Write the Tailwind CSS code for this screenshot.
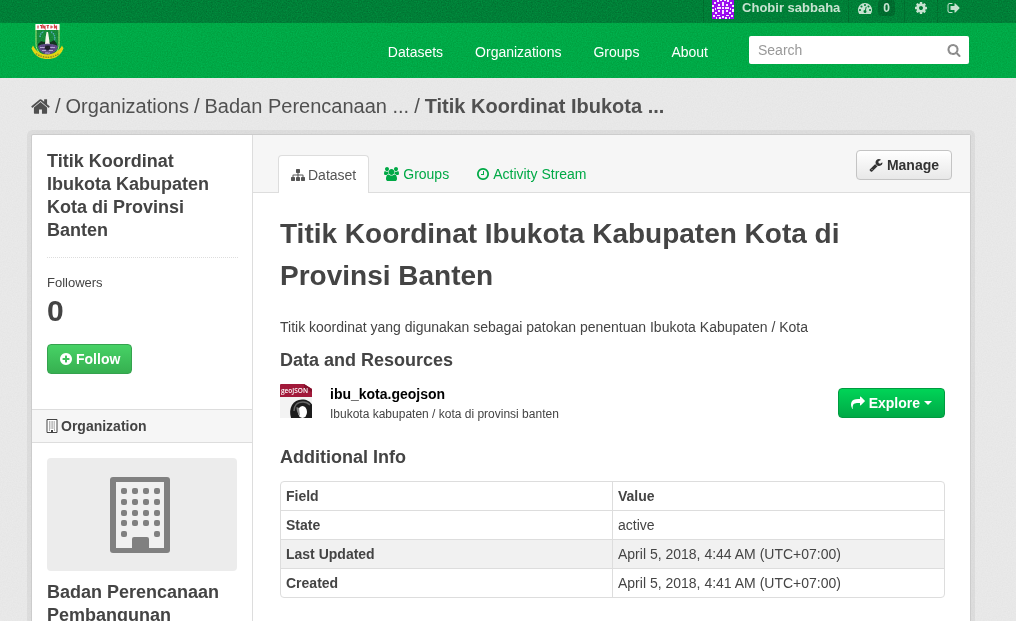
<!DOCTYPE html>
<html lang="en">
<head>
<meta charset="utf-8">
<meta name="viewport" content="width=device-width, initial-scale=1">
<title>Titik Koordinat Ibukota Kabupaten Kota di Provinsi Banten</title>
<script src="https://cdn.jsdelivr.net/npm/@tailwindcss/browser@4"></script>
</head>
<body class="relative flex h-screen flex-col overflow-hidden bg-[#e8e8e8] font-['Liberation_Sans',Arial,sans-serif] text-sm leading-5 text-[#444]">

<!-- Paper grain over the bars and the page background -->
<svg class="pointer-events-none absolute inset-0 z-10 size-full opacity-20 mix-blend-overlay" aria-hidden="true">
  <filter id="grain" x="0" y="0" width="100%" height="100%" color-interpolation-filters="sRGB"><feTurbulence type="fractalNoise" baseFrequency="0.8" numOctaves="2"/><feColorMatrix values="1 0 0 0 0  1 0 0 0 0  1 0 0 0 0  0 0 0 0 1"/></filter>
  <rect width="100%" height="100%" filter="url(#grain)"/>
</svg>

<!-- Account bar -->
<div class="flex h-[23px] shrink-0 items-end justify-end overflow-hidden bg-[#007f37] pr-[46px] text-[13px] font-bold text-[#c6e3d0]">
  <nav class="flex h-[31px] items-center" aria-label="Account">
    <a href="#" class="flex h-full items-center gap-2 border-l border-[#00702f] px-2">
      <svg class="size-[22px]" viewBox="0 0 22 22" shape-rendering="crispEdges" aria-hidden="true">
        <path fill="#9a0cf0" d="M0 0h22v22H0z"/>
        <path fill="#f6e8ff" d="M10 5h2v4h-2zM10 13h2v4h-2zM5 10h4v2H5zM13 10h4v2h-4zM10 10h2v2h-2zM2 5h2v2H2zM18 5h2v2h-2zM5 3h2v2H5zM15 3h2v2h-2zM6 7h2v2H6zM14 7h2v2h-2zM6 13h2v2H6zM14 13h2v2h-2zM0 8h2v2H0zM20 8h2v2h-2zM0 12h2v3H0zM20 12h2v3h-2zM3 15h2v2H3zM17 15h2v2h-2zM1 18h2v2H1zM19 18h2v2h-2zM5 18h3v1H5zM14 18h3v1h-3zM7 20h2v2H7zM13 20h2v2h-2zM10 19h2v2h-2zM8 2h2v2H8zM12 2h2v2h-2zM3 11h1v2H3zM18 11h1v2h-1zM4 20h1v2H4zM17 20h1v2h-1z"/>
      </svg>
      <span>Chobir sabbaha</span>
    </a>
    <a href="#" aria-label="Dashboard, 0 new" class="flex h-full items-center gap-[6px] border-l border-[#00702f] px-[9px]">
      <svg class="size-[14px]" viewBox="0 0 1792 1792" fill="currentColor" aria-hidden="true"><path d="M384 1152q0-53-37.5-90.5t-90.5-37.5-90.5 37.5-37.5 90.5 37.5 90.5 90.5 37.5 90.5-37.5 37.5-90.5zm192-448q0-53-37.5-90.5t-90.5-37.5-90.5 37.5-37.5 90.5 37.5 90.5 90.5 37.5 90.5-37.5 37.5-90.5zm428 481l101-382q6-26-7.5-48.5t-38.5-29.5-48 6.5-30 39.5l-101 382q-60 5-107 43.5t-63 98.5q-20 77 20 146t117 89 146-20 89-117q16-60-6-117t-72-91zm660-33q0-53-37.5-90.5t-90.5-37.5-90.5 37.5-37.5 90.5 37.5 90.5 90.5 37.5 90.5-37.5 37.5-90.5zm-640-640q0-53-37.5-90.5t-90.5-37.5-90.5 37.5-37.5 90.5 37.5 90.5 90.5 37.5 90.5-37.5 37.5-90.5zm448 192q0-53-37.5-90.5t-90.5-37.5-90.5 37.5-37.5 90.5 37.5 90.5 90.5 37.5 90.5-37.5 37.5-90.5zm320 448q0 261-141 483-19 29-54 29h-1402q-35 0-54-29-141-221-141-483 0-182 71-348t191-286 286-191 348-71 348 71 286 191 191 286 71 348z"/></svg>
      <span class="rounded bg-[#006b2e] px-[5px] text-xs leading-4">0</span>
    </a>
    <a href="#" aria-label="Settings" class="flex h-full items-center border-l border-[#00702f] px-[9px]">
      <svg class="size-[14px]" viewBox="0 0 1792 1792" fill="currentColor" aria-hidden="true"><path d="M1152 896q0-106-75-181t-181-75-181 75-75 181 75 181 181 75 181-75 75-181zm512-109v222q0 12-8 23t-20 13l-185 28q-19 54-39 91 35 50 107 138 10 12 10 25t-9 23q-27 37-99 108t-94 71q-12 0-26-9l-138-108q-44 23-91 38-16 136-29 186-7 28-36 28h-222q-14 0-24.5-8.5t-11.5-21.5l-28-184q-49-16-90-37l-141 107q-10 9-25 9-14 0-25-11-126-114-165-168-7-10-7-23 0-12 8-23 15-21 51-66.5t54-70.5q-27-50-41-99l-183-27q-13-2-21-12.5t-8-23.5v-222q0-12 8-23t19-13l186-28q14-46 39-92-40-57-107-138-10-12-10-24 0-10 9-23 26-36 98.5-107.5t94.5-71.5q13 0 26 10l138 107q44-23 91-38 16-136 29-186 7-28 36-28h222q14 0 24.5 8.5t11.5 21.5l28 184q49 16 90 37l142-107q9-9 24-9 13 0 25 10 129 119 165 170 7 8 7 22 0 12-8 23-15 21-51 66.5t-54 70.5q26 50 41 98l183 28q13 2 21 12.5t8 23.5z"/></svg>
    </a>
    <a href="#" aria-label="Log out" class="flex h-full items-center border-l border-[#00702f] px-[9px]">
      <svg class="size-[14px]" viewBox="0 0 1792 1792" fill="currentColor" aria-hidden="true"><path d="M704 1440q0 4 1 20t.5 26.5-3 23.5-10 19.5-20.5 6.5h-320q-119 0-203.5-84.5t-84.5-203.5v-704q0-119 84.5-203.5t203.5-84.5h320q13 0 22.5 9.5t9.5 22.5q0 4 1 20t.5 26.5-3 23.5-10 19.5-20.5 6.5h-320q-66 0-113 47t-47 113v704q0 66 47 113t113 47h312l11.5 1 11.5 3 8 5.5 7 9 2 13.5zm928-544q0 26-19 45l-544 544q-19 19-45 19t-45-19-19-45v-288h-448q-26 0-45-19t-19-45v-384q0-26 19-45t45-19h448v-288q0-26 19-45t45-19 45 19l544 544q19 19 19 45z"/></svg>
    </a>
  </nav>
</div>

<!-- Site header -->
<header class="flex h-[55px] shrink-0 items-start justify-between bg-[#00a946] pr-[47px] pl-[31px] text-white">
  <a href="#" aria-label="Banten open data">
    <svg class="h-[37px] w-[33px]" viewBox="0 0 33 37" aria-hidden="true">
      <path d="M5 1.500h23v20c0 7-5 11-11.500 13.500C10 32 5 28 5 21z" fill="#158a3b" stroke="#a8df71"/>
      <path d="M4.500 1h24v6h-24z" fill="#fff"/>
      <path d="M7 2.500v3M9 2.500h1.500v3M12 5.500v-3l2 3v-3M15.500 2.500h2.500M16.800 2.500v3M20 2.500v3M20 4h2M23.500 5.500v-3l2 3v-3" fill="none" stroke="#d23d42" stroke-width="1.200"/>
      <path d="M9 14c0-3 2-5 4-5M20 9c3 1 5 5 3 10" fill="none" stroke="#54a8ba" stroke-width="1.400" stroke-dasharray="1.500 .7"/>
      <path d="M7 21l3-3 3 1 3-1 4 1 3-2 3 4v3H7z" fill="#12331f"/>
      <path d="M14 21l.7-7 .8-5h1.500l.8 5 1 7z" fill="#f4f4ea"/>
      <path d="M7 23c5-3 14-3 20 0-1 5-5 8-10 9-5-1-9-4-10-9z" fill="#5f4b86"/>
      <path d="M9 24.500h5m5 0h5m-13 3h4m3 0h4m-8 2.500h5" stroke="#b5a5d2"/>
      <path d="M14.500 22.500h4l1 3-3 2-3-2z" fill="#20202b"/>
      <path d="M.5 25.500l1.500-3c3 6 8 9 14.500 9S28 28 31 22.500l1.500 3-1.500 3c-3 5-8 7.500-14.500 7.500S5 33.500 2 28.500z" fill="#e3d514"/>
      <path d="M5 30.500c7 5 16 5 23 0" fill="none" stroke="#8c862a" stroke-width="1.400" stroke-dasharray="1.500 1"/>
    </svg>
  </a>
  <div class="flex items-center gap-[41px] pt-[13px]">
    <nav class="flex gap-8 pt-1" aria-label="Main">
      <a href="#">Datasets</a>
      <a href="#">Organizations</a>
      <a href="#">Groups</a>
      <a href="#">About</a>
    </nav>
    <form class="flex h-7 w-[220px] items-center rounded-xs bg-white pr-2 pl-[9px]" role="search">
      <input type="search" aria-label="Search" placeholder="Search" class="min-w-0 flex-1 bg-transparent text-[#555] outline-none placeholder:text-[#999]">
      <button type="submit" aria-label="Submit search" class="text-[#8c8c8c]">
        <svg class="size-[14px]" viewBox="0 0 1792 1792" fill="currentColor" aria-hidden="true"><path d="M1216 832q0-185-131.500-316.500t-316.500-131.500-316.500 131.500-131.500 316.500 131.500 316.500 316.500 131.500 316.500-131.500 131.500-316.500zm512 832q0 52-38 90t-90 38q-54 0-90-38l-343-342q-179 124-399 124-143 0-273.500-55.500t-225-150-150-225-55.500-273.500 55.500-273.500 150-225 225-150 273.500-55.500 273.500 55.500 225 150 150 225 55.500 273.500q0 220-124 399l343 343q37 37 37 90z"/></svg>
      </button>
    </form>
  </div>
</header>

<div class="relative z-20 flex flex-1 flex-col pr-[45px] pl-[31px]">
  <nav aria-label="Breadcrumb" class="flex h-14 shrink-0 items-center gap-[5px] text-xl text-[#505050]">
    <a href="#" aria-label="Home">
      <svg class="size-[19px]" viewBox="64 64 1664 1664" fill="currentColor" aria-hidden="true"><path d="M1472 992v480q0 26-19 45t-45 19h-384v-384h-256v384h-384q-26 0-45-19t-19-45v-480q0-1 .5-3t.5-3l575-474 575 474q1 2 1 6zm223-69l-62 74q-8 9-21 11h-3q-13 0-21-7l-692-577-692 577q-12 8-24 7-13-2-21-11l-62-74q-8-10-7-23.500t11-21.500l719-599q32-26 76-26t76 26l244 204v-195q0-14 9-23t23-9h192q14 0 23 9t9 23v408l219 182q10 8 11 21.500t-7 23.500z"/></svg>
    </a>
    <span>/</span><a href="#">Organizations</a>
    <span>/</span><a href="#">Badan Perencanaan ...</a>
    <span>/</span><a href="#" class="font-bold">Titik Koordinat Ibukota ...</a>
  </nav>

  <div class="flex flex-1 rounded-t-xs border border-[#ccc] bg-white ring-4 ring-black/5">
    <aside class="w-[221px] shrink-0 border-r border-[#ddd]">
      <section class="px-[15px] pt-[15px] pb-[35px]">
        <h1 class="-mr-px border-b border-dotted border-[#ddd] pb-[15px] text-lg leading-[23px] font-bold">Titik Koordinat Ibukota Kabupaten Kota di Provinsi Banten</h1>
        <dl class="pt-[15px]">
          <dt class="text-[13px]">Followers</dt>
          <dd class="text-[30px] leading-9 font-bold">0</dd>
        </dl>
        <button type="button" class="mt-[15px] flex h-[30px] items-center gap-[3px] rounded-sm border border-[#35a24e] bg-linear-to-b from-[#47d266] to-[#36b050] px-[11px] font-bold text-white">
          <svg class="size-[14px]" viewBox="0 0 1792 1792" fill="currentColor" aria-hidden="true"><path d="M1344 960v-128q0-26-19-45t-45-19h-256v-256q0-26-19-45t-45-19h-128q-26 0-45 19t-19 45v256h-256q-26 0-45 19t-19 45v128q0 26 19 45t45 19h256v256q0 26 19 45t45 19h128q26 0 45-19t19-45v-256h256q26 0 45-19t19-45zm320-64q0 209-103 385.500t-279.500 279.500-385.500 103-385.500-103-279.500-279.500-103-385.500 103-385.500 279.500-279.500 385.500-103 385.500 103 279.500 279.500 103 385.500z"/></svg>
          Follow
        </button>
      </section>
      <section>
        <h2 class="flex h-[34px] items-center gap-[3px] border-y border-[#ddd] bg-[#f6f6f6] px-[14px] font-bold">
          <svg class="h-[14px] w-[12px]" viewBox="0 0 12 14" aria-hidden="true">
            <path d="M1 .5h10v13H1z" fill="#fff" stroke="#444"/>
            <path d="M3 3h6M3 5h6M3 7h6M3 9h6M3 11h1M8 11h1" stroke="#666" stroke-dasharray="1 .6"/>
            <path d="M5 11h2v3H5z" fill="#444"/>
          </svg>
          Organization
        </h2>
        <div class="px-[15px] pt-[15px]">
          <div class="flex h-[113px] items-center justify-center rounded-sm bg-[#ececec] pr-1">
            <svg class="h-[76px] w-[60px]" viewBox="0 0 60 76" fill="#808080" aria-label="Organization" role="img">
              <rect width="60" height="76" rx="3"/>
              <path d="M6 5h48v66H39V62q0-2-2-2H24q-2 0-2 2v9H6z" fill="#f0f0f0"/>
              <g id="row"><rect x="11" y="11" width="6" height="6" rx="2"/><rect x="22" y="11" width="6" height="6" rx="2"/><rect x="33" y="11" width="6" height="6" rx="2"/><rect x="44" y="11" width="6" height="6" rx="2"/></g>
              <use href="#row" y="11"/><use href="#row" y="22"/><use href="#row" y="32"/>
              <rect x="11" y="54" width="6" height="6" rx="2"/><rect x="44" y="54" width="6" height="6" rx="2"/>
            </svg>
          </div>
          <h2 class="pt-[10px] text-lg leading-[23px] font-bold">Badan Perencanaan Pembangunan</h2>
        </div>
      </section>
    </aside>

    <main class="min-w-0 flex-1">
      <header class="flex h-[58px] items-end justify-between border-b border-[#ddd] bg-[#f6f6f6] pr-[18px] pl-[25px]">
        <nav class="-mb-px flex gap-[2px]" aria-label="Dataset sections">
          <a href="#" aria-current="page" class="flex h-[38px] items-center gap-[3px] rounded-t-sm border border-b-0 border-[#ddd] bg-white px-3 text-[#555]">
            <svg class="size-[14px]" viewBox="0 0 1792 1792" fill="currentColor" aria-hidden="true"><path d="M1792 1248v320q0 40-28 68t-68 28h-320q-40 0-68-28t-28-68v-320q0-40 28-68t68-28h96v-192h-512v192h96q40 0 68 28t28 68v320q0 40-28 68t-68 28h-320q-40 0-68-28t-28-68v-320q0-40 28-68t68-28h96v-192h-512v192h96q40 0 68 28t28 68v320q0 40-28 68t-68 28h-320q-40 0-68-28t-28-68v-320q0-40 28-68t68-28h96v-192q0-52 38-90t90-38h512v-192h-96q-40 0-68-28t-28-68v-320q0-40 28-68t68-28h320q40 0 68 28t28 68v320q0 40-28 68t-68 28h-96v192h512q52 0 90 38t38 90v192h96q40 0 68 28t28 68z"/></svg>
            Dataset
          </a>
          <a href="#" class="flex h-[38px] items-center gap-1 px-[13px] text-[#00a946]">
            <svg class="h-[14px] w-[15px]" viewBox="-64 0 1920 1792" fill="currentColor" aria-hidden="true"><path d="M529 896q-162 5-265 128h-134q-82 0-138-40.500t-56-118.500q0-353 124-353 6 0 43.500 21t97.500 42.500 119 21.500q67 0 133-23-5 37-5 66 0 139 81 256zm1071 637q0 120-73 189.500t-194 69.500h-874q-121 0-194-69.500t-73-189.500q0-53 3.500-103.500t14-109 26.500-108.500 43-97.500 62-81 85.500-53.500 111.500-20q10 0 43 21.500t73 48 107 48 135 21.500 135-21.500 107-48 73-48 43-21.500q61 0 111.500 20t85.500 53.500 62 81 43 97.500 26.500 108.500 14 109 3.500 103.500zm-1024-1277q0 106-75 181t-181 75-181-75-75-181 75-181 181-75 181 75 75 181zm704 384q0 159-112.500 271.500t-271.500 112.500-271.500-112.500-112.500-271.500 112.500-271.500 271.500-112.500 271.500 112.500 112.500 271.500zm576 225q0 78-56 118.500t-138 40.500h-134q-103-123-265-128 81-117 81-256 0-29-5-66 66 23 133 23 59 0 119-21.500t97.500-42.500 43.500-21q124 0 124 353zm-128-609q0 106-75 181t-181 75-181-75-75-181 75-181 181-75 181 75 75 181z"/></svg>
            Groups
          </a>
          <a href="#" class="flex h-[38px] items-center gap-[3px] px-3 text-[#00a946]">
            <svg class="size-[14px]" viewBox="0 0 1792 1792" fill="currentColor" aria-hidden="true"><path d="M1024 544v448q0 14-9 23t-23 9h-320q-14 0-23-9t-9-23v-64q0-14 9-23t23-9h224v-352q0-14 9-23t23-9h64q14 0 23 9t9 23zm416 352q0-148-73-273t-198-198-273-73-273 73-198 198-73 273 73 273 198 198 273 73 273-73 198-198 73-273zm224 0q0 209-103 385.500t-279.500 279.500-385.500 103-385.500-103-279.500-279.500-103-385.500 103-385.500 279.500-279.500 385.500-103 385.500 103 279.500 279.500 103 385.500z"/></svg>
            Activity Stream
          </a>
        </nav>
        <a href="#" class="mb-3 flex h-[30px] items-center gap-1 rounded-sm border border-[#c4c4c4] bg-linear-to-b from-white to-[#e8e8e8] px-3 font-bold text-[#333]">
          <svg class="size-[14px]" viewBox="0 0 1792 1792" fill="currentColor" aria-hidden="true"><path d="M448 1472q0-26-19-45t-45-19-45 19-19 45 19 45 45 19 45-19 19-45zm644-420l-682 682q-37 37-90 37-52 0-91-37l-106-108q-38-36-38-90 0-53 38-91l681-681q39 98 114.500 173.500t173.500 114.500zm634-435q0 39-23 106-47 134-164.500 217.500t-258.500 83.500q-185 0-316.500-131.500t-131.500-316.500 131.500-316.500 316.500-131.500q58 0 121.500 16.500t107.500 46.500q16 11 16 28t-16 28l-293 169v224l193 107q5-3 79-48.500t135.500-81 70.500-35.500q15 0 23.500 10t8.500 25z"/></svg>
          Manage
        </a>
      </header>

      <article class="pt-5 pr-[25px] pl-[27px]">
        <h1 class="text-[28px] leading-[42px] font-bold">Titik Koordinat Ibukota Kabupaten Kota di Provinsi Banten</h1>
        <p class="pt-5">Titik koordinat yang digunakan sebagai patokan penentuan Ibukota Kabupaten / Kota</p>
        <h2 class="pt-3 text-lg leading-[23px] font-bold">Data and Resources</h2>
        <div class="flex items-start justify-between pt-3">
          <div class="flex gap-[18px]">
            <svg class="h-[35px] w-8" viewBox="0 0 32 35" role="img" aria-label="geoJSON file">
              <path d="M0 1h26l6 5v28H0z" fill="#f3f3f3"/>
              <path d="M0 1q0-1 1-1h23l8 5v8H0z" fill="#a1193a"/>
              <path d="M24 0l8 5v3q-4-2-8-2z" fill="#84102c"/>
              <text x="1" y="9" font-family="Open Sans, sans-serif" font-size="6.500" font-weight="600" fill="#fff">geoJSON</text>
              <path d="M11 34C8 24 13 15.500 22 15.500c5 0 8 2 10 5V34z" fill="#1c1c1c"/>
              <path d="M14 27c0-5 3-9 9-9 3 0 5 1 7 3" stroke="#666" stroke-width="1.500" fill="none"/>
              <ellipse cx="22.500" cy="28" rx="4.500" ry="6" fill="#fff"/>
              <path d="M16.500 23q0 6 3.500 9l-1-8z" fill="#888"/>
            </svg>
            <div>
              <a href="#" class="block font-bold text-black">ibu_kota.geojson</a>
              <p class="text-xs leading-5">Ibukota kabupaten / kota di provinsi banten</p>
            </div>
          </div>
          <button type="button" aria-haspopup="menu" class="mt-1 flex h-[30px] items-center gap-1 rounded-sm border border-[#009b40] bg-linear-to-b from-[#00d457] to-[#00a946] px-3 font-bold text-white">
            <svg class="size-[14px]" viewBox="0 0 1792 1792" fill="currentColor" aria-hidden="true"><path d="M1792 640q0 26-19 45l-512 512q-19 19-45 19t-45-19-19-45v-256h-224q-98 0-175.500 6t-154 21.500-133 42.500-105.500 69.500-80 101-48.500 138.500-17.500 181q0 55 5 123 0 6 2.500 23.500t2.500 26.500q0 15-8.500 25t-23.500 10q-16 0-28-17-7-9-13-22t-13.500-30-10.500-24q-127-285-127-451 0-199 53-333 162-403 875-403h224v-256q0-26 19-45t45-19 45 19l512 512q19 19 19 45z"/></svg>
            Explore
            <svg class="h-1 w-2" viewBox="0 0 8 4" fill="currentColor" aria-hidden="true"><path d="M0 0h8L4 4z"/></svg>
          </button>
        </div>
        <h2 class="pt-[22px] text-lg leading-[23px] font-bold">Additional Info</h2>
        <div class="mt-3 rounded-sm border border-[#ddd]">
          <table class="w-full table-fixed text-left">
            <thead>
              <tr class="h-7"><th scope="col" class="px-[5px]">Field</th><th scope="col" class="border-l border-[#ddd] px-[5px]">Value</th></tr>
            </thead>
            <tbody>
              <tr class="h-[29px] border-t border-[#ddd]"><th scope="row" class="px-[5px]">State</th><td class="border-l border-[#ddd] px-[5px]">active</td></tr>
              <tr class="h-[29px] border-t border-[#ddd] bg-[#f1f1f1]"><th scope="row" class="px-[5px]">Last Updated</th><td class="border-l border-[#ddd] px-[5px]">April 5, 2018, 4:44 AM (UTC+07:00)</td></tr>
              <tr class="h-[29px] border-t border-[#ddd]"><th scope="row" class="px-[5px]">Created</th><td class="border-l border-[#ddd] px-[5px]">April 5, 2018, 4:41 AM (UTC+07:00)</td></tr>
            </tbody>
          </table>
        </div>
      </article>
    </main>
  </div>
</div>
</body>
</html>
